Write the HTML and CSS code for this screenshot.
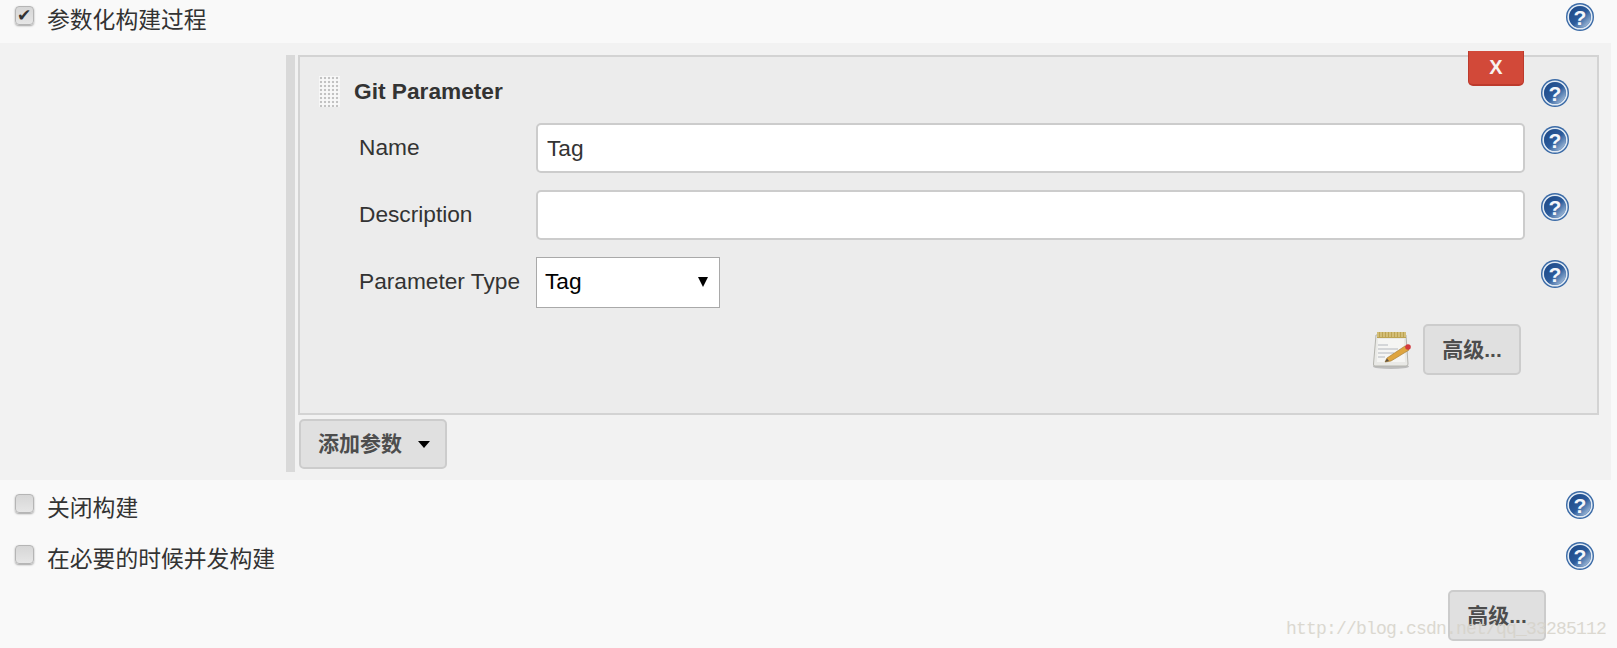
FILE: index.html
```html
<!DOCTYPE html>
<html lang="en">
<head>
    <meta charset="UTF-8">
    <meta name="viewport" content="width=device-width, initial-scale=1.0">
    <title>Job Config</title>
    <link rel="stylesheet" href="styles.css">
</head>
<body>
    <svg class="defs" width="0" height="0">
        <defs>
            <linearGradient id="helpFill" x1="0.1" y1="0.1" x2="0.95" y2="0.95">
                <stop offset="0" stop-color="#1f4a88"/>
                <stop offset="0.5" stop-color="#2c5c9c"/>
                <stop offset="1" stop-color="#b4cae2"/>
            </linearGradient>
            <symbol id="help" viewBox="0 0 28 28">
                <circle cx="14" cy="14" r="14" fill="#3a6aa6"/>
                <circle cx="14" cy="14" r="11.8" fill="none" stroke="#e3ebf4" stroke-width="1.6"/>
                <circle cx="14" cy="14" r="10.8" fill="url(#helpFill)"/>
                <text x="14" y="21.5" text-anchor="middle" class="help-mark">?</text>
            </symbol>
        </defs>
    </svg>

    <div class="page">
        <div class="row row-first">
            <label class="check"><input type="checkbox" checked><span>参数化构建过程</span></label>
            <svg class="help"><use href="#help"/></svg>
        </div>

        <div class="params">
            <div class="repeat">
                <div class="panel">
                    <button class="btn-delete">X</button>
                    <div class="panel-head">
                        <div class="grip"></div>
                        <b class="panel-title">Git Parameter</b>
                        <svg class="help"><use href="#help"/></svg>
                    </div>
                    <div class="field">
                        <label class="field-label">Name</label>
                        <input class="text-input" type="text" value="Tag">
                        <svg class="help"><use href="#help"/></svg>
                    </div>
                    <div class="field">
                        <label class="field-label">Description</label>
                        <input class="text-input" type="text">
                        <svg class="help"><use href="#help"/></svg>
                    </div>
                    <div class="field">
                        <label class="field-label">Parameter Type</label>
                        <div class="select-wrap">
                            <select class="select"><option>Tag</option></select>
                        </div>
                        <div class="spacer"></div>
                        <svg class="help"><use href="#help"/></svg>
                    </div>
                    <div class="panel-actions">
                        <svg class="notepad" width="41" height="38" viewBox="0 0 41 38">
                            <ellipse cx="19" cy="35.5" rx="18" ry="2.5" fill="#bdbdbd"/>
                            <path d="M4 4 H34 L36 33 Q36 35 34 35 H3 Q1 35 1.5 33 Z" fill="#e9e9e6" stroke="#b4b4ae"/>
                            <path d="M6 8 H32 L33 31 H5 Z" fill="#f5f5f3"/>
                            <rect x="5" y="1" width="29" height="6" fill="#bda352"/>
                            <path d="M6 1 V6 M9 1 V6 M12 1 V6 M15 1 V6 M18 1 V6 M21 1 V6 M24 1 V6 M27 1 V6 M30 1 V6 M33 1 V6" stroke="#e8d89c" stroke-width="1"/>
                            <path d="M6 14 H16 M6 18 H26 M6 22 H22 M6 26 H13" stroke="#c9cccf" stroke-width="1.4"/>
                            <path d="M15 27 L33 15 L37 19 L19 30 L13 31 Z" fill="#dfa53f" stroke="#a98138" stroke-width="0.7"/>
                            <path d="M13 31 L15 27.5 L17 30 Z" fill="#5a5044"/>
                            <circle cx="36" cy="16" r="2.8" fill="#d23a3e"/>
                        </svg>
                        <button class="btn btn-advanced">高级...</button>
                    </div>
                </div>
                <button class="btn btn-add">添加参数<span class="caret"></span></button>
            </div>
        </div>

        <div class="row">
            <label class="check"><input type="checkbox"><span>关闭构建</span></label>
            <svg class="help"><use href="#help"/></svg>
        </div>
        <div class="row">
            <label class="check"><input type="checkbox"><span>在必要的时候并发构建</span></label>
            <svg class="help"><use href="#help"/></svg>
        </div>

        <div class="page-actions">
            <button class="btn btn-advanced">高级...</button>
        </div>

        <div class="watermark">http://blog.csdn.net/qq_33285112</div>
    </div>
</body>
</html>
```

FILE: styles.css
```css
html, body {
    margin: 0;
    padding: 0;
}
body {
    font-family: "Liberation Sans", "Noto Sans CJK SC", Arial, sans-serif;
    font-size: 22.7px;
    color: #333;
    background-color: #f9f9f9;
}
.defs {
    position: absolute;
}
.page {
    position: relative;
    height: 648px;
    overflow: hidden;
}
.help {
    display: block;
    flex: none;
    width: 28px;
    height: 28px;
}
.help-mark {
    font-family: "Liberation Sans", sans-serif;
    font-size: 21px;
    font-weight: bold;
    fill: #f4f7fb;
}

/* top level rows */
.row {
    display: flex;
    justify-content: space-between;
    align-items: flex-start;
    box-sizing: border-box;
    height: 51px;
    padding: 11px 23px 0 15px;
}
.row-first {
    height: 43px;
    padding-top: 3px;
}
.check {
    display: flex;
    align-items: flex-start;
    font-size: 22.8px;
    line-height: 34px;
}
.check input {
    appearance: none;
    position: relative;
    box-sizing: border-box;
    width: 19px;
    height: 19px;
    margin: 3px 13px 0 0;
    background: linear-gradient(#d6d6d6, #e6e6e6);
    border: 1px solid #b5b5b5;
    border-radius: 4px;
    box-shadow: 0 1px 2px rgba(0,0,0,0.35);
}
.check input:checked::after {
    content: "\2714";
    position: absolute;
    left: 1px;
    top: 0;
    font-family: "DejaVu Sans", sans-serif;
    font-size: 17px;
    line-height: 17px;
    color: #333;
}

/* parameters block */
.params {
    box-sizing: border-box;
    height: 437px;
    margin-right: 6px;
    padding: 12px 12px 8px 286px;
    background: #f2f2f2;
}
.repeat {
    height: 100%;
    padding-left: 3px;
    border-left: 9px solid #d9d9d9;
}
.panel {
    position: relative;
    box-sizing: border-box;
    height: 360px;
    display: flex;
    flex-direction: column;
    gap: 17px;
    background: #ececec;
    border: 2px solid #d3d3d3;
}
.btn-delete {
    position: absolute;
    top: -6px;
    right: 73px;
    width: 56px;
    height: 35px;
    padding: 0;
    font-family: inherit;
    font-size: 20px;
    font-weight: bold;
    color: #f7f2f0;
    background: #d24939;
    border: 1px solid #bd3a2c;
    border-width: 0 1px 2px;
    border-radius: 0 0 5px 5px;
}
.panel-head {
    display: flex;
    align-items: flex-start;
    height: 49px;
    padding: 0 28px 0 19px;
}
.grip {
    flex: none;
    width: 21px;
    height: 31px;
    margin-top: 19px;
    background-color: #f8f8f8;
    background-image: radial-gradient(circle, #c2c2c2 1.1px, transparent 1.6px);
    background-size: 4px 4px;
}
.panel-title {
    flex: 1;
    margin: 21px 0 0 14px;
    line-height: 26px;
}
.panel-head .help {
    margin-top: 22px;
}
.field {
    display: flex;
    align-items: flex-start;
    padding: 0 28px 0 59px;
}
.field-label {
    flex: none;
    width: 177px;
    line-height: 49px;
}
.field .help {
    margin: 3px 0 0 16px;
}
.text-input {
    flex: 1;
    min-width: 0;
    box-sizing: border-box;
    height: 50px;
    padding: 0 9px;
    font-family: inherit;
    font-size: 22.7px;
    color: #333;
    background: #fff;
    border: 2px solid #ccc;
    border-radius: 5px;
}
.spacer {
    flex: 1;
}
.select-wrap {
    position: relative;
    flex: none;
    width: 184px;
    height: 51px;
}
.select-wrap::after {
    content: "";
    position: absolute;
    right: 12px;
    top: 20px;
    border-style: solid;
    border-width: 10px 5px 0;
    border-color: #000 transparent transparent;
}
.select {
    appearance: none;
    box-sizing: border-box;
    width: 100%;
    height: 100%;
    padding: 0 8px 3px;
    font-family: inherit;
    font-size: 22.7px;
    color: #000;
    background: #fff;
    border: 1px solid #a9a9a9;
    border-radius: 0;
}
.panel-actions {
    display: flex;
    justify-content: flex-end;
    align-items: center;
    gap: 10px;
    margin-top: -1px;
    padding-right: 76px;
}
.notepad {
    flex: none;
}

/* buttons */
.btn {
    box-sizing: border-box;
    padding: 0 0 4px;
    font-family: inherit;
    font-size: 21px;
    font-weight: bold;
    color: #4d4d4d;
    background: #e0e0e0;
    border: 2px solid #ccc;
    border-radius: 5px;
}
.btn-advanced {
    width: 98px;
    height: 51px;
}
.btn-add {
    display: flex;
    align-items: center;
    width: 148px;
    height: 50px;
    margin: 4px 0 0 1px;
    padding: 0 0 4px 17px;
}
.caret {
    margin: 4px 0 0 16px;
    border-style: solid;
    border-width: 7px 6.5px 0;
    border-color: #000 transparent transparent;
}
.page-actions {
    display: flex;
    justify-content: flex-end;
    margin-top: 8px;
    padding-right: 71px;
}

.watermark {
    position: absolute;
    right: 11px;
    top: 618px;
    font-family: "Liberation Mono", monospace;
    font-size: 18px;
    letter-spacing: -0.8px;
    line-height: 22px;
    color: #d6d3ca;
    opacity: 0.85;
    pointer-events: none;
}
```
